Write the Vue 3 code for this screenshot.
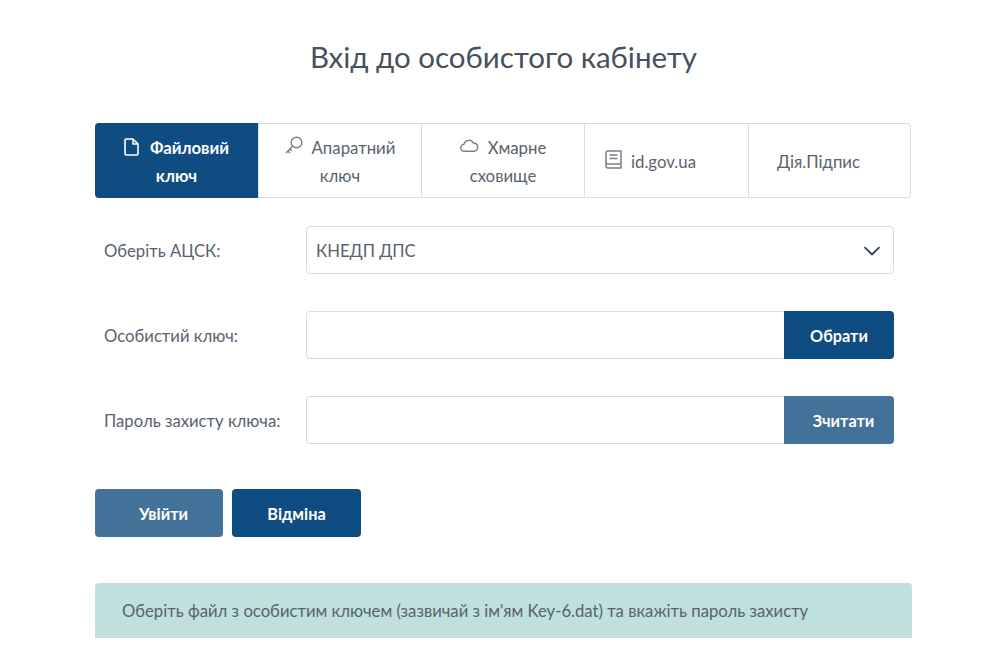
<template>
  <main class="page">
    <h1 class="title">Вхід до особистого кабінету</h1>
    <nav class="tabs">
      <a v-for="t in tabs" :key="t.id" class="tab" :class="[t.id, { active: t.id === 'file' }]">
        <span class="tab-text">
          <svg v-if="t.id === 'file'" class="ico i-file" viewBox="0 0 15 18" fill="none" stroke="currentColor" stroke-width="1.6" stroke-linejoin="round"><path d="M2.300 1h6.700l5 5v9.300a1.700 1.700 0 0 1-1.700 1.700H2.700A1.700 1.700 0 0 1 1 15.300V2.300A1.300 1.300 0 0 1 2.300 1zM9 1v5h5"/></svg>
          <svg v-if="t.id === 'hw'" class="ico i-key" viewBox="0 0 18 18" fill="none" stroke="#77808a" stroke-width="1.400"><circle cx="11.500" cy="6.500" r="5.300"/><path d="M7.700 10.300 1 17M3 15l2 2M5 13l2 2"/></svg>
          <svg v-if="t.id === 'cloud'" class="ico i-cloud" viewBox="0 0 19 13" fill="none" stroke="#77808a" stroke-width="1.400"><path d="M4.500 12.200a3.500 3.500 0 0 1-.5-7A5 5 0 0 1 13.300 4a4.200 4.200 0 0 1 1.400 8.200z"/></svg>
          <svg v-if="t.id === 'id'" class="ico i-book" viewBox="0 0 17 19" fill="none" stroke="#77808a" stroke-width="1.500"><path d="M1 14.500V2.500A1.500 1.500 0 0 1 2.500 1H16v13H3A2 2 0 0 0 1 16a2 2 0 0 0 2 2h13v-4M4.500 5h8M4.500 8.500h8"/></svg>{{ t.label }}
        </span>
      </a>
    </nav>
    <section class="form">
      <div class="row">
        <label class="lbl">Оберіть АЦСК:</label>
        <div class="control select">
          <span>КНЕДП ДПС</span>
          <svg class="chev" viewBox="0 0 18 10" fill="none" stroke="#2f4358" stroke-width="1.8"><path d="M1.500 1.200 9 8.500l7.500-7.300"/></svg>
        </div>
      </div>
      <div class="row">
        <label class="lbl">Особистий ключ:</label>
        <div class="group">
          <div class="control input"></div>
          <button class="btn dark side">Обрати</button>
        </div>
      </div>
      <div class="row">
        <label class="lbl">Пароль захисту ключа:</label>
        <div class="group">
          <div class="control input"></div>
          <button class="btn light side">Зчитати</button>
        </div>
      </div>
    </section>
    <div class="actions">
      <button class="btn light act">Увійти</button>
      <button class="btn dark act">Відміна</button>
    </div>
    <div class="alert">Оберіть файл з особистим ключем (зазвичай з ім'ям Key-6.dat) та вкажіть пароль захисту</div>
  </main>
</template>

<script setup>
const tabs = [
  { id: 'file', label: 'Файловий ключ' },
  { id: 'hw', label: 'Апаратний ключ' },
  { id: 'cloud', label: 'Хмарне сховище' },
  { id: 'id', label: 'id.gov.ua' },
  { id: 'diia', label: 'Дія.Підпис' }
]
</script>

<style>
html, body { margin: 0; background: #fff; }
</style>

<style scoped>
.page {
  width: 817px;
  margin-left: 95px;
  padding-top: 38px;
  font-family: Lato, "Open Sans", sans-serif;
  color: #58636e;
  box-sizing: border-box;
}
.title {
  margin: 0 0 48px;
  font-size: 29.500px;
  line-height: 37px;
  font-weight: 400;
  text-align: center;
  color: #46515b;
}
.tabs {
  display: grid;
  grid-template-columns: 162px 163px 163px 164px minmax(0, 1fr);
  width: 816px;
  height: 75px;
  box-sizing: border-box;
  border: 1px solid #d6dde4;
  border-radius: 4px;
}
.tab {
  box-sizing: border-box;
  min-width: 0;
  display: flex;
  align-items: center;
  justify-content: center;
  text-align: center;
  font-size: 16.800px;
  line-height: 28px;
  padding: 2px 14px 0;
  border-left: 1px solid #d6dde4;
}
.tab:first-child { border-left: 0; }
.tab.id { padding-right: 46px; }
.tab.diia { padding-right: 36px; }
.tab.active {
  margin: -1px 0 -1px -1px;
  background: #0f4c81;
  color: #fff;
  font-weight: 700;
  border-radius: 4px 0 0 4px;
}
.ico { margin-right: 10px; vertical-align: -2px; }
.i-file { width: 15px; height: 18px; margin-right: 11px; }
.i-key { width: 18px; height: 18px; margin-right: 9px; vertical-align: 0; }
.i-cloud { width: 19px; height: 13px; margin-right: 9px; vertical-align: 2px; }
.i-book { width: 17px; height: 19px; margin-right: 9px; vertical-align: -1px; }
.form { margin-top: 28px; }
.row { display: flex; align-items: center; height: 48px; margin-bottom: 37px; }
.form .row:last-child { margin-bottom: 0; }
.lbl { width: 211px; padding: 2px 0 0 9px; font-size: 16.700px; box-sizing: border-box; }
.control {
  box-sizing: border-box;
  height: 48px;
  border: 1px solid #d6dde4;
  background: #fff;
}
.select {
  width: 588px;
  border-radius: 4px;
  display: flex;
  align-items: center;
  justify-content: space-between;
  padding: 1px 12px 0 9px;
  font-size: 16.700px;
}
.chev { width: 18px; height: 10px; }
.group { display: flex; width: 588px; }
.input { flex: 1; border-radius: 4px 0 0 4px; border-right: 0; }
.btn {
  border: 0;
  color: #fff;
  font-family: inherit;
  font-size: 16.300px;
  font-weight: 700;
  height: 48px;
  padding: 0;
}
.dark { background: #0f4c81; }
.light { background: #427199; padding-left: 9px; }
.side { width: 110px; border-radius: 0 4px 4px 0; }
.actions { display: flex; gap: 9px; margin-top: 45px; }
.act { width: 128px; border-radius: 4px; }
.act.dark { width: 129px; }
.alert {
  margin-top: 46px;
  height: 55px;
  box-sizing: border-box;
  padding-left: 27px;
  display: flex;
  align-items: center;
  background: #bfe0dc;
  border-radius: 4px 4px 0 0;
  font-size: 16.700px;
}
</style>
